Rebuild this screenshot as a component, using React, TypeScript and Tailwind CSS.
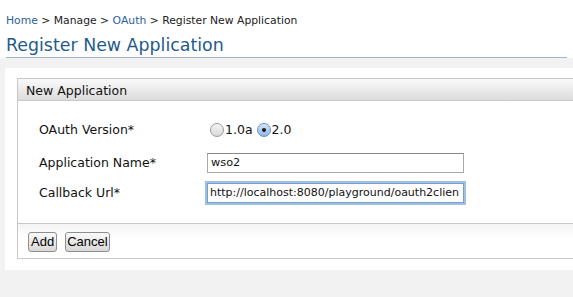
export default function App() {
  return (
    <div className="w-[573px] h-[297px] bg-[#f2f2f2] overflow-hidden font-['DejaVu_Sans',sans-serif] text-black">
      {/* Breadcrumb + title */}
      <div className="bg-white px-[6px] pt-[13px]">
        <div className="text-[10.8px] leading-[16px] text-[#222]">
          <span className="text-[#2a5f9e]">Home</span> &gt; Manage &gt;{" "}
          <span className="text-[#2a5f9e]">OAuth</span> &gt; Register New Application
        </div>
        <h1 className="mt-[5px] text-[17.4px] leading-[22px] text-[#1f5c8c] font-normal pb-[1px] border-b border-[#9fb3d1]">
          Register New Application
        </h1>
      </div>

      {/* Panel */}
      <div className="mt-[10px] ml-[5px] bg-white pt-[10px] pl-[12px] pb-[11px]">
        <div className="border border-r-0 border-[#c8c8c8]">
          <div className="h-[22px] pl-[8px] text-[12.5px] leading-[23px] text-[#111] border-b border-[#c8c8c8] bg-gradient-to-b from-[#fafafa] to-[#dcdcdc]">
            New Application
          </div>

          <div className="pt-[18px] pb-[20px] pl-[21px] text-[12.5px] text-[#111]">
            <div className="flex items-center h-[22px]">
              <div className="w-[168px]">OAuth Version*</div>
              <label className="flex items-center ml-[3px]">
                <span className="w-[14px] h-[14px] rounded-full border border-[#9a9a9a] bg-gradient-to-b from-[#f5f5f5] to-[#d9d9d9]" />
                <span className="ml-[1px]">1.0a</span>
              </label>
              <label className="flex items-center ml-[4px]">
                <span className="w-[14px] h-[14px] rounded-full border border-[#6d8fbf] bg-gradient-to-b from-[#d7e6f7] to-[#8db6e6] flex items-center justify-center">
                  <span className="w-[4px] h-[4px] rounded-full bg-[#1a1a1a]" />
                </span>
                <span className="ml-[1px]">2.0</span>
              </label>
            </div>

            <div className="flex items-center mt-[12px]">
              <div className="w-[168px]">Application Name*</div>
              <div className="w-[257px] h-[20px] border border-[#a8a8a8] border-t-[#8a8a8a] pl-[3px] leading-[18px] text-[11.3px]">
                wso2
              </div>
            </div>

            <div className="flex items-center mt-[10px]">
              <div className="w-[168px]">Callback Url*</div>
              <div className="w-[257px] h-[20px] border border-[#7a9cc8] pl-[2px] leading-[18px] text-[11px] overflow-hidden whitespace-nowrap shadow-[0_0_0_2px_#9ec1e6]">
                http://localhost:8080/playground/oauth2clien
              </div>
            </div>
          </div>

          <div className="border-t border-[#c8c8c8] bg-gradient-to-b from-[#f4f4f4] to-white to-[40%] pt-[8px] pb-[6px] pl-[10px] flex gap-[8px] font-['Liberation_Sans',sans-serif] text-[13px]">
            <button className="h-[20px] px-[2px] rounded-[3px] border border-[#8e8e8e] bg-gradient-to-b from-[#fafafa] to-[#d8d8d8] leading-[18px]">
              Add
            </button>
            <button className="h-[20px] px-[1px] rounded-[3px] border border-[#8e8e8e] bg-gradient-to-b from-[#fafafa] to-[#d8d8d8] leading-[18px]">
              Cancel
            </button>
          </div>
        </div>
      </div>
    </div>
  );
}
